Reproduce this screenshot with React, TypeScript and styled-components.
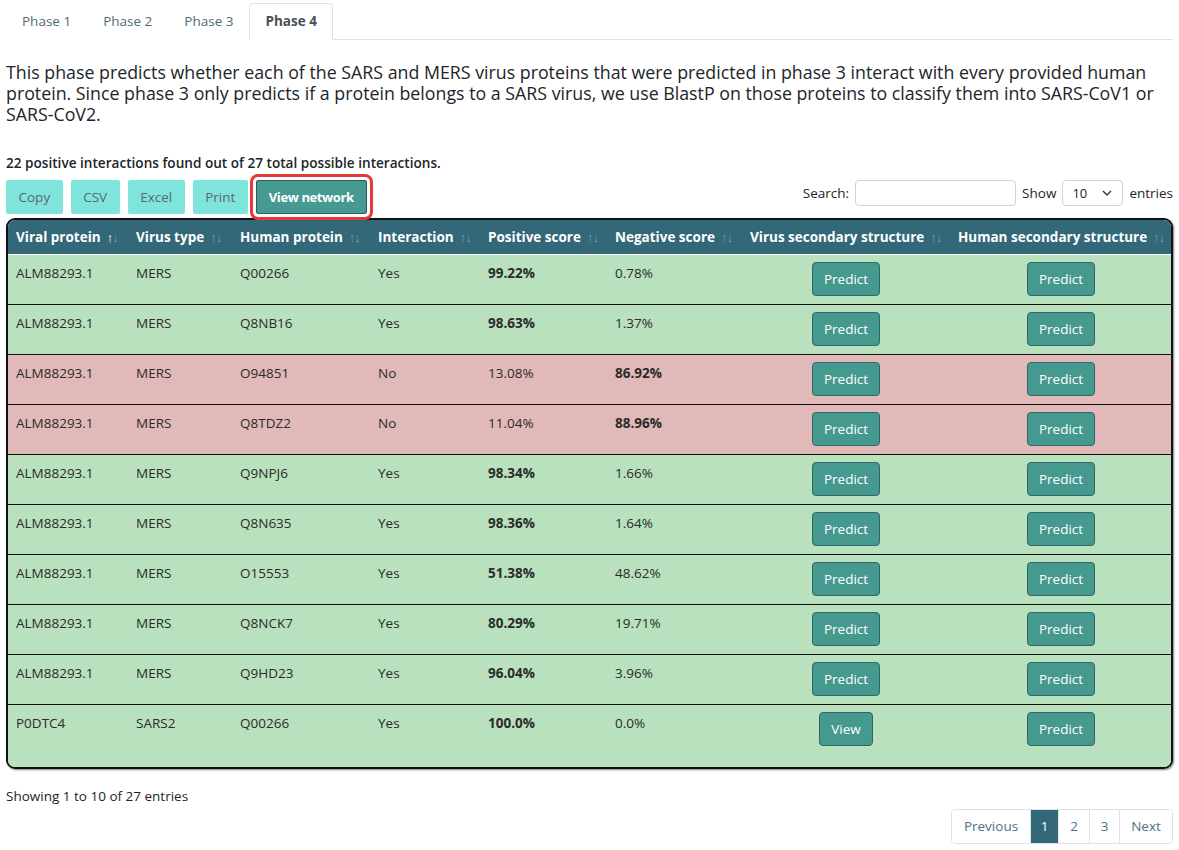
import React from "react";
import styled, { createGlobalStyle } from "styled-components";

const Global = createGlobalStyle`
  html, body { margin: 0; padding: 0; background: #fff; }
  body { font-family: "Open Sans", "Noto Sans", Arial, sans-serif; color: #212529; font-size: 14px; }
  * { box-sizing: border-box; }
`;

const Page = styled.div`
  padding: 3px 6px 0 6px;
`;

const Tabs = styled.ul`
  list-style: none;
  margin: 0;
  padding: 0;
  display: flex;
  border-bottom: 1px solid #dee2e6;
`;

const Tab = styled.li<{ $active?: boolean }>`
  padding: 0 15px;
  height: 37px;
  line-height: 35px;
  font-size: 13.5px;
  margin-bottom: -1px;
  border: 1px solid ${(p) => (p.$active ? "#dee2e6" : "transparent")};
  border-bottom-color: ${(p) => (p.$active ? "#fff" : "transparent")};
  border-radius: 4px 4px 0 0;
  background: #fff;
  color: ${(p) => (p.$active ? "#495057" : "#4f6b7a")};
  font-weight: ${(p) => (p.$active ? 700 : 400)};
`;

const Intro = styled.p`
  margin: 22px 0 0 0;
  font-size: 17.8px;
  line-height: 21px;
  font-weight: 500;
  color: #212529;
`;

const Summary = styled.div`
  margin-top: 28px;
  font-size: 13.6px;
  font-weight: 600;
  line-height: 20px;
`;

const Toolbar = styled.div`
  display: flex;
  justify-content: space-between;
  align-items: flex-start;
  margin-top: 7px;
`;

const ButtonGroup = styled.div`
  display: flex;
  gap: 8px;
`;

const ExportButton = styled.button`
  height: 34px;
  padding: 0 12.5px;
  border: none;
  border-radius: 2px;
  background: #7fe5db;
  color: #5b6670;
  font-family: inherit;
  font-size: 13.5px;
`;

const NetworkButton = styled.button`
  height: 34px;
  padding: 0 12px;
  border: 1px solid #2c5f5a;
  border-radius: 2px;
  background: #469a92;
  color: #fff;
  font-family: inherit;
  font-weight: 700;
  font-size: 13px;
  letter-spacing: -0.4px;
  outline: 3px solid #e53935;
  outline-offset: 3px;
`;

const Controls = styled.div`
  display: flex;
  align-items: center;
  gap: 6px;
  font-size: 13.5px;
  color: #212529;
`;

const SearchInput = styled.input`
  width: 161px;
  height: 26px;
  border: 1px solid #ced4da;
  border-radius: 4px;
`;

const SelectBox = styled.div`
  width: 61px;
  height: 26px;
  border: 1px solid #ced4da;
  border-radius: 4px;
  display: flex;
  align-items: center;
  justify-content: space-between;
  padding: 0 10px 0 9px;
  font-size: 13px;
`;

const TableWrap = styled.div`
  margin-top: 4px;
  border: 2px solid #111;
  border-radius: 9px;
  overflow: hidden;
  box-shadow: 1px 1px 2px rgba(0, 0, 0, 0.5);
`;

const Table = styled.table`
  width: 100%;
  border-collapse: collapse;
  table-layout: fixed;
`;

const HeadCell = styled.th`
  background: #326878;
  color: #fff;
  font-weight: 700;
  font-size: 13.5px;
  text-align: left;
  height: 34px;
  padding: 0 8px;
  white-space: nowrap;
  border-bottom: 1px solid #fff;
`;

const SortIcon = styled.span<{ $active?: boolean }>`
  margin-left: 6px;
  font-size: 13px;
  font-weight: 400;
  color: #7f9ea9;
  letter-spacing: -1px;
  & b { color: ${(p) => (p.$active ? "#fff" : "#7f9ea9")}; font-weight: 400; }
`;

const Row = styled.tr<{ $neg?: boolean }>`
  background: ${(p) => (p.$neg ? "#e1b9b9" : "#b9e1bd")};
  border-top: 1px solid #111;
  &:first-child { border-top: none; }
  &:last-child td { padding-bottom: 21px; }
`;

const Cell = styled.td<{ $bold?: boolean }>`
  vertical-align: top;
  padding: 8px 8px 7px 8px;
  font-size: 13.5px;
  line-height: 20px;
  color: #2b2b2b;
  font-weight: ${(p) => (p.$bold ? 700 : 400)};
`;

const ActionCell = styled.td`
  vertical-align: top;
  text-align: center;
  padding: 7px 8px 8px 8px;
`;

const ActionButton = styled.button`
  height: 34px;
  padding: 0 11px;
  border: 1px solid #2e6763;
  border-radius: 4px;
  background: #46998f;
  color: #fff;
  font-family: inherit;
  font-size: 13.5px;
`;

const Footer = styled.div`
  display: flex;
  flex-direction: column;
  margin-top: 17px;
`;

const Info = styled.div`
  font-size: 13.5px;
  line-height: 20px;
`;

const Pager = styled.div`
  align-self: flex-end;
  display: flex;
  margin-top: 3px;
  border: 1px solid #dee2e6;
  border-radius: 4px;
  overflow: hidden;
`;

const PageItem = styled.div<{ $active?: boolean; $w: number }>`
  width: ${(p) => p.$w}px;
  height: 33px;
  display: flex;
  align-items: center;
  justify-content: center;
  font-size: 13.5px;
  color: ${(p) => (p.$active ? "#fff" : "#4a7384")};
  background: ${(p) => (p.$active ? "#326878" : "#fff")};
  border-left: 1px solid #dee2e6;
  &:first-child { border-left: none; }
`;

const rows = [
  ["ALM88293.1", "MERS", "Q00266", "Yes", "99.22%", "0.78%"],
  ["ALM88293.1", "MERS", "Q8NB16", "Yes", "98.63%", "1.37%"],
  ["ALM88293.1", "MERS", "O94851", "No", "13.08%", "86.92%"],
  ["ALM88293.1", "MERS", "Q8TDZ2", "No", "11.04%", "88.96%"],
  ["ALM88293.1", "MERS", "Q9NPJ6", "Yes", "98.34%", "1.66%"],
  ["ALM88293.1", "MERS", "Q8N635", "Yes", "98.36%", "1.64%"],
  ["ALM88293.1", "MERS", "O15553", "Yes", "51.38%", "48.62%"],
  ["ALM88293.1", "MERS", "Q8NCK7", "Yes", "80.29%", "19.71%"],
  ["ALM88293.1", "MERS", "Q9HD23", "Yes", "96.04%", "3.96%"],
  ["P0DTC4", "SARS2", "Q00266", "Yes", "100.0%", "0.0%"],
];

const headers = [
  "Viral protein",
  "Virus type",
  "Human protein",
  "Interaction",
  "Positive score",
  "Negative score",
  "Virus secondary structure",
  "Human secondary structure",
];
const widths = [120, 104, 138, 110, 127, 135, 208, 222];

export default function App() {
  return (
    <Page>
      <Global />
      <Tabs>
        <Tab>Phase 1</Tab>
        <Tab>Phase 2</Tab>
        <Tab>Phase 3</Tab>
        <Tab $active>Phase 4</Tab>
      </Tabs>
      <Intro>
        This phase predicts whether each of the SARS and MERS virus proteins that were predicted in phase 3 interact with every provided human
        protein. Since phase 3 only predicts if a protein belongs to a SARS virus, we use BlastP on those proteins to classify them into SARS-CoV1 or
        SARS-CoV2.
      </Intro>
      <Summary>22 positive interactions found out of 27 total possible interactions.</Summary>
      <Toolbar>
        <ButtonGroup>
          <ExportButton>Copy</ExportButton>
          <ExportButton>CSV</ExportButton>
          <ExportButton>Excel</ExportButton>
          <ExportButton>Print</ExportButton>
          <NetworkButton>View network</NetworkButton>
        </ButtonGroup>
        <Controls>
          <span>Search:</span>
          <SearchInput />
          <span>Show</span>
          <SelectBox>
            <span>10</span>
            <svg width="10" height="6" viewBox="0 0 10 6">
              <path d="M1 1l4 4 4-4" fill="none" stroke="#333" strokeWidth="1.4" />
            </svg>
          </SelectBox>
          <span>entries</span>
        </Controls>
      </Toolbar>
      <TableWrap>
        <Table>
          <colgroup>
            {widths.map((w, i) => (
              <col key={i} style={{ width: w }} />
            ))}
          </colgroup>
          <thead>
            <tr>
              {headers.map((h, i) => (
                <HeadCell key={h}>
                  {h}
                  <SortIcon $active={i === 0}>
                    <b>↑</b>↓
                  </SortIcon>
                </HeadCell>
              ))}
            </tr>
          </thead>
          <tbody>
            {rows.map((r, i) => {
              const neg = r[3] === "No";
              return (
                <Row key={i} $neg={neg}>
                  <Cell>{r[0]}</Cell>
                  <Cell>{r[1]}</Cell>
                  <Cell>{r[2]}</Cell>
                  <Cell>{r[3]}</Cell>
                  <Cell $bold={!neg}>{r[4]}</Cell>
                  <Cell $bold={neg}>{r[5]}</Cell>
                  <ActionCell>
                    <ActionButton>{i === 9 ? "View" : "Predict"}</ActionButton>
                  </ActionCell>
                  <ActionCell>
                    <ActionButton>Predict</ActionButton>
                  </ActionCell>
                </Row>
              );
            })}
          </tbody>
        </Table>
      </TableWrap>
      <Footer>
        <Info>Showing 1 to 10 of 27 entries</Info>
        <Pager>
          <PageItem $w={78}>Previous</PageItem>
          <PageItem $w={28} $active>1</PageItem>
          <PageItem $w={31}>2</PageItem>
          <PageItem $w={30}>3</PageItem>
          <PageItem $w={53}>Next</PageItem>
        </Pager>
      </Footer>
    </Page>
  );
}
